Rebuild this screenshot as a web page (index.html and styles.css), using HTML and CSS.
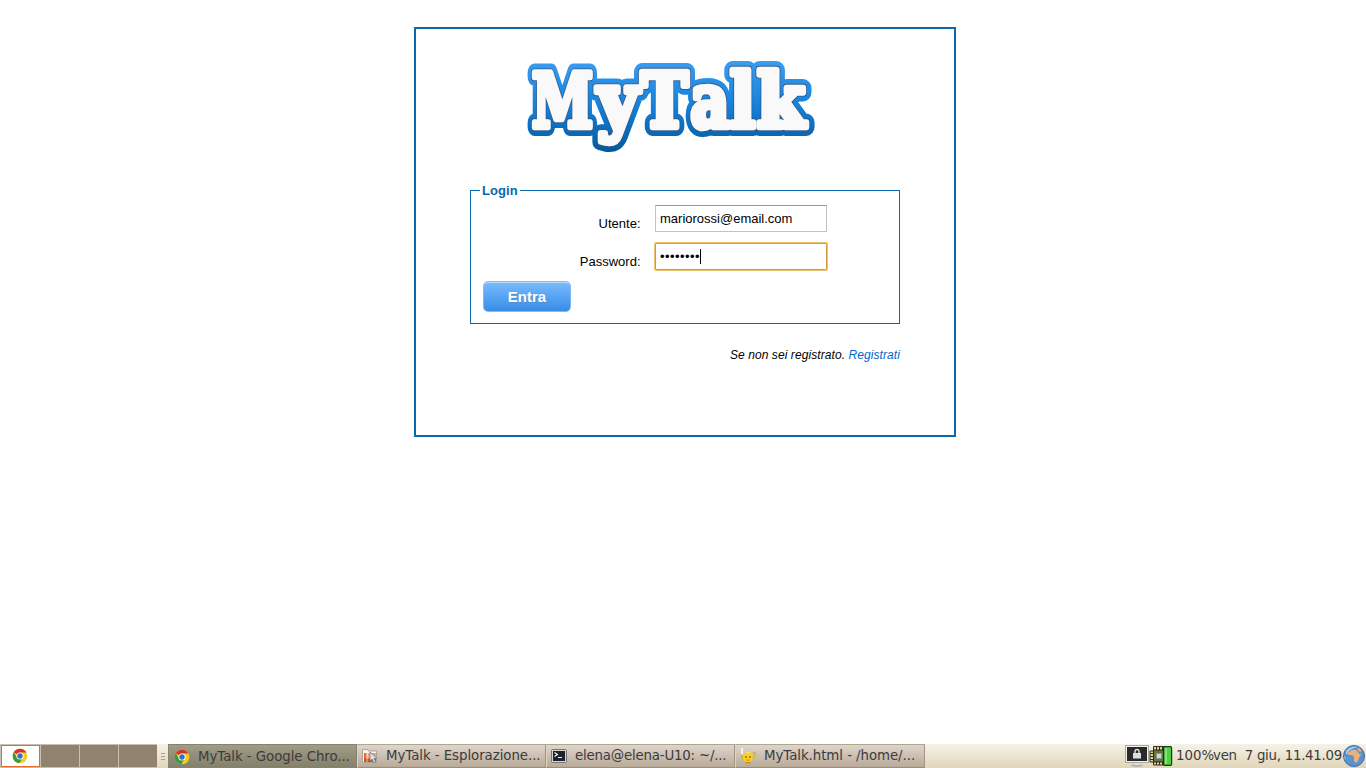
FILE: index.html
```html
<!DOCTYPE html>
<html lang="it">
<head>
<meta charset="utf-8">
<title>MyTalk</title>
<link rel="stylesheet" href="styles.css">
</head>
<body>
<svg class="defs" width="0" height="0" aria-hidden="true">
  <defs>
    <linearGradient id="blue" gradientUnits="userSpaceOnUse" x1="0" y1="10" x2="0" y2="100">
      <stop offset="0" stop-color="#3c9df0"/><stop offset=".5" stop-color="#1581dc"/><stop offset="1" stop-color="#045a9f"/>
    </linearGradient>
    <g id="word">
      <text x="17" y="77" textLength="61" lengthAdjust="spacingAndGlyphs">M</text>
      <text x="82.500" y="76" textLength="41" lengthAdjust="spacingAndGlyphs">y</text>
      <text x="126" y="77" textLength="47" lengthAdjust="spacingAndGlyphs">T</text>
      <text x="175.500" y="77" textLength="39" lengthAdjust="spacingAndGlyphs">a</text>
      <text x="215" y="77" textLength="25" lengthAdjust="spacingAndGlyphs">l</text>
      <text x="242" y="77" textLength="48" lengthAdjust="spacingAndGlyphs">k</text>
    </g>
    <symbol id="chrome" viewBox="0 0 16 16">
      <circle cx="8" cy="8" r="7.3" fill="#f4cc24"/>
      <path d="M8 8 1.7 4.3A7.3 7.3 0 0 1 14.4 4.6H8Z" fill="#d8332a"/>
      <path d="M1.7 4.3A7.3 7.3 0 0 0 7.4 15.3L10.5 10 8 8 4.8 9Z" fill="#3c9a3c"/>
      <circle cx="8" cy="8" r="3.6" fill="#fff"/><circle cx="8" cy="8" r="2.7" fill="#356fc0"/>
    </symbol>
  </defs>
</svg>
<main class="desktop">
  <section class="panel">
    <svg class="logo" width="310" height="110" viewBox="0 0 310 110" role="img" aria-label="MyTalk">
      <use href="#word" class="logo-outer"/>
      <use href="#word" class="logo-shade"/>
      <use href="#word" class="logo-face"/>
    </svg>
    <fieldset class="login">
      <legend>Login</legend>
      <div class="row"><label>Utente:</label><div class="field">mariorossi@email.com</div></div>
      <div class="row"><label>Password:</label><div class="field focused"><span class="dots">••••••••</span><i class="caret"></i></div></div>
      <button class="enter" type="button">Entra</button>
    </fieldset>
    <p class="register">Se non sei registrato. <a>Registrati</a></p>
  </section>
</main>
<footer class="taskbar">
  <div class="pager">
    <div class="cell current"><svg width="16" height="16"><use href="#chrome"/></svg></div>
    <div class="cell"></div><div class="cell"></div><div class="cell"></div>
  </div>
  <div class="grip"><i></i><i></i><i></i></div>
  <div class="task active"><svg width="16" height="16"><use href="#chrome"/></svg><span>MyTalk - Google Chro...</span></div>
  <div class="task"><svg width="16" height="16" viewBox="0 0 16 16">
    <path d="M.5 14.500V1.500h5l1 1.500H14.500v11.500Z" fill="#f7f5f2" stroke="#aaa59f"/>
    <path d="M2 5h2.500v9H2Z" fill="#e8682f"/><path d="M5.500 5h8.500v9H5.500Z" fill="#f2a27c"/><path d="M2 10.500h2.500V14H2ZM5.500 10.500H14V14H5.500Z" fill="#dd4a16"/>
    <path d="M8 4v9l2-2 1.800 4 2-1-1.800-3.500h3Z" fill="#e0e0e0" stroke="#777" stroke-width=".8"/></svg><span>MyTalk - Esplorazione...</span></div>
  <div class="task terminal"><svg width="16" height="16" viewBox="0 0 16 16">
    <rect x=".5" y="1.500" width="15" height="13" rx="1" fill="#d5d5d0" stroke="#777"/><rect x="2" y="3" width="12" height="10" fill="#1d232b"/>
    <path d="M3.500 4.500 6.500 6.500 3.500 8.500M7 9.500h4" fill="none" stroke="#fff" stroke-width="1.100"/></svg><span>elena@elena-U10: ~/...</span></div>
  <div class="task last"><svg width="16" height="16" viewBox="0 0 16 16">
    <path d="M1 0q2 1 1 3t1 3" fill="none" stroke="#f5f5f5" stroke-width="2"/><path d="M12.500 6q3-3 3 0T12 11M4 9.500 1.500 7Q2 11 5 12" fill="none" stroke="#d7b32a" stroke-width="1.300"/>
    <ellipse cx="8" cy="9.500" rx="5" ry="4.700" fill="#f2d51e"/><path d="M5 5q3-3 6 0Z" fill="#f7e869"/><path d="M5.500 14h5v1.300h-5Z" fill="#c3921c"/>
    <circle cx="6" cy="9" r=".9" fill="#c94a1d"/><circle cx="10" cy="9" r=".9" fill="#c94a1d"/><path d="M6.500 12q1.500 .6 3 0" stroke="#d87a1d" fill="none"/></svg><span>MyTalk.html - /home/...</span></div>
  <div class="tray">
    <svg width="24" height="24" viewBox="0 0 24 24">
      <ellipse cx="12" cy="21.500" rx="6" ry="1.500" fill="#b5b3ae"/><path d="M9.500 18h5v3h-5Z" fill="#deded9"/>
      <rect x=".5" y="1.500" width="23" height="17" fill="#f1f1ee" stroke="#a9a9a4"/><rect x="2" y="3" width="20" height="14" fill="#292b2a"/>
      <path d="M10 9.500V7.500a2 2 0 0 1 4 0V9.500" fill="none" stroke="#ddd" stroke-width="1.400"/><rect x="8" y="9" width="8" height="5.500" fill="#ddd"/></svg>
    <svg width="24" height="24" viewBox="0 0 24 24">
      <path d="M4.500 2.500H15.500v18.500H4.500v-3H1v-11h3.500Z" fill="#e2d58a" stroke="#303020"/>
      <path d="M1 9.500h4M1 12.500h4M1 15.500h4M7.500 2.500v4M10.500 2.500v4M13.500 2.500v4M7.500 18v3M10.500 18v3M13.500 18v3" stroke="#303020"/>
      <rect x="4.500" y="6" width="11" height="12" fill="#66704f" stroke="#24291b"/><rect x="7.500" y="9.500" width="5" height="5" fill="#d5d9ca" stroke="#8d957d"/>
      <rect x="14.600" y="2.600" width="8" height="18.800" rx="1.200" fill="#4fd044" stroke="#143b11" stroke-width="1.200"/><path d="M17 4v16" stroke="#86e878" stroke-width="1.800"/></svg>
    <span class="battery">100%</span><span class="clock">ven&nbsp; 7 giu, 11.41.09</span>
    <svg width="24" height="24" viewBox="0 0 24 24">
      <circle cx="12" cy="12" r="10.500" fill="#5b92d0" stroke="#3669aa"/><path d="M4 7q5-6 12-4Q8 4 4 11Z" fill="#a9caea"/>
      <path d="M7 8l3-2h4l2 2 1 2h2l-2 4-1 3-2 2-2-2v-4l-2-2H7l-2-2ZM17 4l3 3-2 1-3-3ZM2 12l2 2-1 2Z" fill="#eab27a"/></svg>
  </div>
</footer>
</body>
</html>
```
FILE: styles.css
```css
* { box-sizing: border-box; }
body { margin: 0; height: 768px; display: flex; flex-direction: column; overflow: hidden; background: #fff; color: #000; font: 13px "Liberation Sans", Arial, sans-serif; }
.defs { position: absolute; }
svg { display: block; flex: none; }
.desktop { flex: 1; padding: 27px 0 0 414px; }
.panel { width: 542px; height: 410px; border: 2px solid #0a67a8; padding: 21px 54px 0; }
.logo { margin-left: 45px; font: bold 74px "DejaVu Serif", serif; stroke-linejoin: round; }
.logo-outer { fill: url(#blue); stroke: url(#blue); stroke-width: 18px; }
.logo-shade { fill: #31588a; stroke: #31588a; stroke-width: 8.4px; }
.logo-face { fill: #f9f9f9; stroke: #f9f9f9; stroke-width: 6.6px; }
.login { margin: 23px 0 0; height: 141px; border: 1px solid #0768b0; padding: 7px 12px 0; }
.login legend { height: 15px; line-height: 15px; margin-left: -3px; padding: 0 2px; color: #0768b0; font-weight: bold; letter-spacing: .1px; }
.row { display: flex; gap: 14.5px; height: 38px; }
.row label { width: 157.5px; text-align: right; line-height: 15px; padding-top: 11px; }
.field { display: flex; align-items: center; width: 172px; height: 27px; border: 1px solid #c3c3c3; border-top-color: #999; padding-left: 4px; }
.focused { border-color: #d69a3d; border-radius: 1px; box-shadow: 0 0 0 1px #efc46d; }
.dots { letter-spacing: .45px; }
.caret { width: 1px; height: 15px; background: #000; }
.enter { display: block; width: 88px; height: 31px; border: 1px solid #83b8f4; border-radius: 5px; padding: 0; background: linear-gradient(#79bbff, #378de5); box-shadow: inset 0 1px #bbdaf7; color: #fff; font: bold 15px "Liberation Sans", sans-serif; text-shadow: 1px 1px #528ecc; }
.register { margin: 24px 0 0; line-height: 14px; font-size: 12px; font-style: italic; letter-spacing: .08px; text-align: right; white-space: nowrap; }
.register a { color: #0066cc; }
.taskbar { height: 24px; display: flex; background: linear-gradient(#f6f2e8, #e1d6b9); color: #3c3c3c; font: 13.33px "DejaVu Sans", sans-serif; white-space: nowrap; }
.pager { display: flex; gap: 1px; width: 157px; padding: 1px 0 1px 1px; background: #c9c0b0; }
.cell { flex: 1; background: #90826f; }
.current { flex: 0 0 39px; display: flex; align-items: center; justify-content: center; padding-right: 2px; background: #fff; border: 1px solid #df6a33; }
.grip { width: 11px; padding: 9px 3px 0 4px; display: grid; align-content: start; gap: 2px; }
.grip i { height: 1px; background: #aaa18e; }
.task { width: 189px; padding: 0 0 1px 4px; display: flex; align-items: center; gap: 8px; border: 1px solid #b1a58e; border-left-color: #ddd3c5; border-right-color: #a49583; border-bottom-color: #9b8c7c; background: linear-gradient(#ded5cb, #b8aa99); letter-spacing: -.05px; }
.last { width: 190px; }
.terminal { letter-spacing: -.18px; }
.active { padding: 1px 0 0 5px; background: linear-gradient(#a09c87, #84806c); border-color: #88826d; }
.tray { margin-left: auto; display: flex; align-items: center; height: 23px; }
.battery { width: 37px; margin-left: 3px; }
.clock { width: 129px; letter-spacing: -.26px; }
```
